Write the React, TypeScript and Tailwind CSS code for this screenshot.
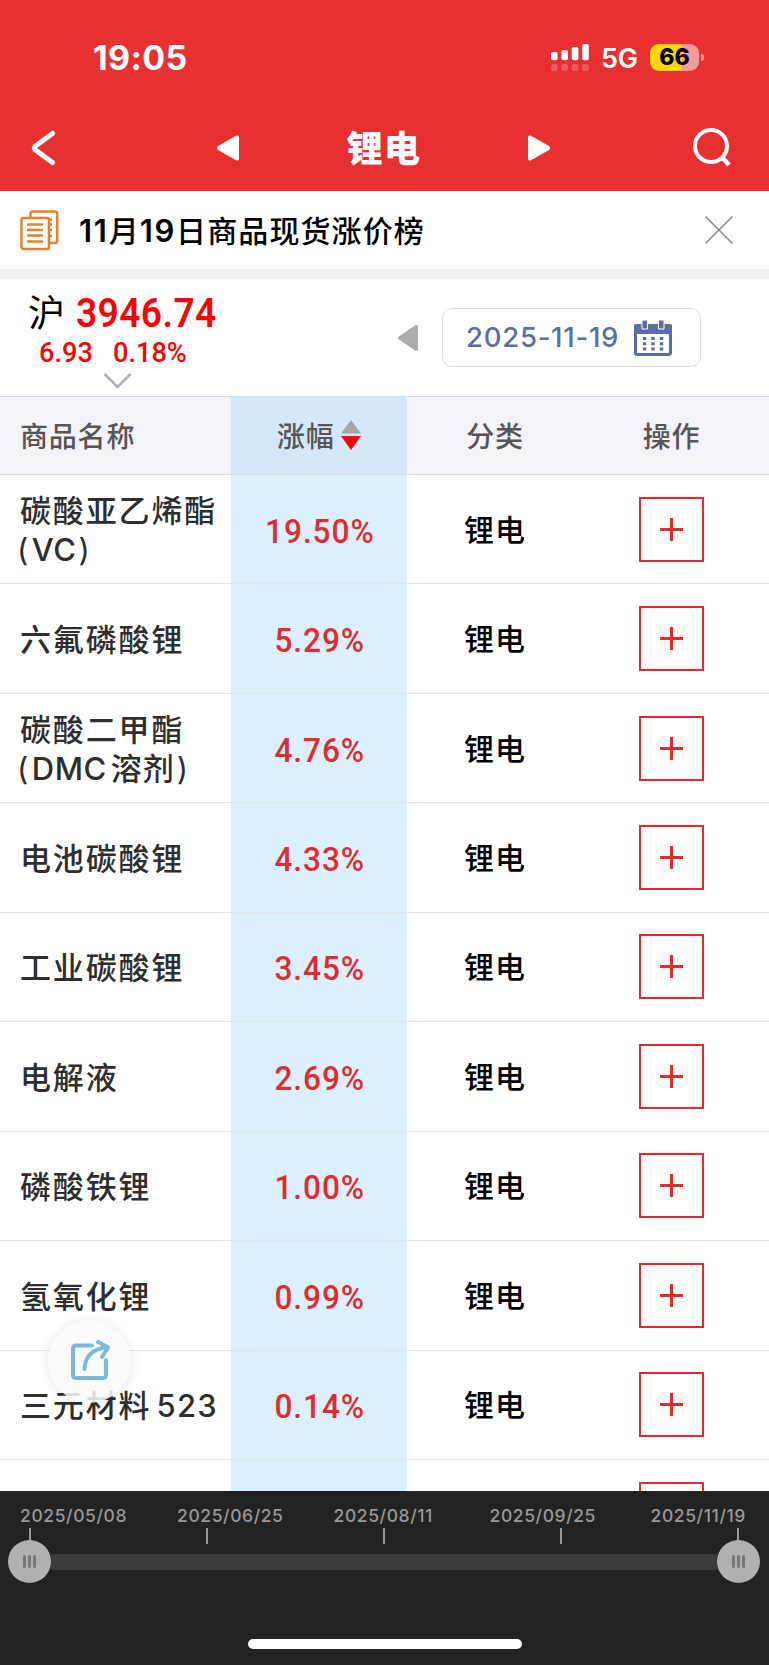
import React from "react";

function Paren({ children }: { children: React.ReactNode }) {
  return (
    <span className="ml-[-3px] inline-flex tracking-[0.5px]">
      <span className="mr-[3px] font-normal">(</span>
      {children}
      <span className="ml-[2px] font-normal">)</span>
    </span>
  );
}

const rows: { name: React.ReactNode[]; pct: string }[] = [
  { name: ["碳酸亚乙烯酯", <Paren>VC</Paren>], pct: "19.50" },
  { name: ["六氟磷酸锂"], pct: "5.29" },
  {
    name: [
      "碳酸二甲酯",
      <Paren>
        <span className="mr-[4px]">DMC</span>
        <span className="tracking-[1px]">溶剂</span>
      </Paren>,
    ],
    pct: "4.76",
  },
  { name: ["电池碳酸锂"], pct: "4.33" },
  { name: ["工业碳酸锂"], pct: "3.45" },
  { name: ["电解液"], pct: "2.69" },
  { name: ["磷酸铁锂"], pct: "1.00" },
  { name: ["氢氧化锂"], pct: "0.99" },
  {
    name: [
      <span className="[word-spacing:-5px]">
        三元材料 <span className="tracking-[1.2px]">523</span>
      </span>,
    ],
    pct: "0.14",
  },
  { name: [""], pct: "" },
];

const dates = ["2025/05/08", "2025/06/25", "2025/08/11", "2025/09/25", "2025/11/19"];

function StatusBar() {
  return (
    <div className="flex h-[102px] items-start pl-[93px] pr-[65px] pt-[38px] text-white">
      <div className="text-[34px] font-bold leading-[40px] tracking-[0.4px]">19:05</div>
      <svg className="ml-auto mt-[5px]" width="40" height="29" viewBox="0 0 40 29" fill="#fff">
        <rect x="1" y="9" width="6.6" height="8.2" rx="2" />
        <rect x="11.4" y="7" width="6.6" height="10.2" rx="2" />
        <rect x="21.8" y="4" width="6.6" height="13.2" rx="2" />
        <rect x="32.2" y="1" width="6.6" height="16.2" rx="2" />
        <g opacity="0.2">
          <rect x="1" y="21" width="6.6" height="7" rx="2" />
          <rect x="11.4" y="21" width="6.6" height="7" rx="2" />
          <rect x="21.8" y="21" width="6.6" height="7" rx="2" />
          <rect x="32.2" y="21" width="6.6" height="7" rx="2" />
        </g>
      </svg>
      <div className="ml-[11px] text-[27px] font-semibold leading-[41px] tracking-[-0.1px]">5G</div>
      <div className="ml-[12px] mt-[6px] flex h-[27px] w-[49px] items-center justify-center rounded-[9px] bg-[linear-gradient(90deg,#ffd60a_66%,#f39a9c_66%)] text-[23px] font-extrabold text-black">
        66
      </div>
      <div className="ml-[2px] mt-[16px] h-[7px] w-[3px] rounded-r-full bg-[#f39a9c]" />
    </div>
  );
}

function TitleBar() {
  return (
    <div className="flex h-[89px] items-center justify-between pl-[30px] pr-[38px] text-white">
      <svg width="26" height="38" viewBox="0 0 26 38" fill="none" stroke="#fff" strokeWidth="5" strokeLinecap="round" strokeLinejoin="round" className="mt-[2px]">
        <path d="M22.500 4.500L5.500 17Q3 19 5.500 21L22.500 33.500" />
      </svg>
      <div className="mr-[-19px] flex items-center">
        <svg width="24" height="28" viewBox="0 0 24 28" fill="#fff" className="mt-[3px]">
          <path d="M2 12L20 1.800Q23 .5 23 3.500V24.500Q23 27.500 20 26.200L2 16Q0 14 2 12Z" />
        </svg>
        <div className="ml-[107px] mr-[106px] mt-[5px] text-[36px] font-black leading-[44px] tracking-[1.2px]">锂电</div>
        <svg width="24" height="28" viewBox="0 0 24 28" fill="#fff" className="mt-[3px]">
          <path d="M22 12L4 1.800Q1 .5 1 3.500V24.500Q1 27.500 4 26.200L22 16Q24 14 22 12Z" />
        </svg>
      </div>
      <svg width="39" height="40" viewBox="0 0 39 40" fill="none" stroke="#fff" strokeWidth="4">
        <circle cx="19" cy="19" r="16" />
        <path d="M29.500 29.500L37 38" strokeWidth="4.500" />
      </svg>
    </div>
  );
}

function Notice() {
  return (
    <div className="flex h-[78px] items-center pl-[19px] pr-[35px]">
      <svg width="41" height="42" viewBox="0 0 41 42" fill="none" stroke="#e58127" strokeWidth="2.400" strokeLinejoin="round">
        <path d="M11.500 8V4.500Q11.500 2.500 13.500 2.500H36Q38.200 2.500 38.200 4.500V32Q38.200 34 36 34H30" />
        <rect x="2.500" y="9" width="27.500" height="31" rx="2" />
        <path d="M8 15.500H24M8 21H24M8 26.500H24M8 32.500H24M29.500 10.500H33M29.500 15.500H33M29.500 21H33M29.500 27H33" />
      </svg>
      <div className="ml-[19px] mt-[1px] whitespace-nowrap text-[30px] font-medium leading-[40px] tracking-[1.1px] text-black">
        <span className="text-[31px] font-semibold tracking-[1.7px]">11</span>月
        <span className="text-[31px] font-semibold tracking-[1.7px]">19</span>日商品现货涨价榜
      </div>
      <svg className="ml-auto" width="30" height="30" viewBox="0 0 30 30" stroke="#8b8b8b" strokeWidth="1.600">
        <path d="M1.500 1.500L28.500 28.500M28.500 1.500L1.500 28.500" />
      </svg>
    </div>
  );
}

function IndexBar() {
  return (
    <div className="flex h-[117px]">
      <div className="w-[236px] pt-[10px]">
        <div className="flex h-[50px] items-center pl-[28px]">
          <span className="text-[37px] leading-[50px] text-black">沪</span>
          <span className="ml-[11px] origin-left scale-x-[0.93] font-[Roboto] text-[40px] font-semibold leading-[50px] tracking-[0.4px] text-[#ff0000]">
            3946.74
          </span>
        </div>
        <div className="flex h-[30px] items-center pl-[39px] font-[Roboto] text-[28px] font-medium leading-[28px] text-[#ff0000]">
          <span className="mt-[-2px] origin-left scale-x-[0.97]">6.93</span>
          <span className="ml-[18px] mt-[-2px] origin-left scale-x-[0.97]">0.18%</span>
        </div>
        <svg className="ml-[103px] mt-[4px]" width="29" height="16" viewBox="0 0 29 16" fill="none" stroke="#b0b0b0" strokeWidth="2.500">
          <path d="M1.500 1L14.500 14L27.500 1" />
        </svg>
      </div>
      <svg className="ml-[161px] mt-[45px]" width="22" height="28" viewBox="0 0 22 28" fill="#acacac">
        <path d="M2 12.500L18 1.500Q21 0 21 3V25Q21 28 18 26.500L2 15.500Q0 14 2 12.500Z" />
      </svg>
      <div className="ml-[23px] mt-[29px] flex h-[59px] w-[259px] items-center rounded-[10px] border border-[#dedede] pl-[23px] text-[#5a6da5]">
        <span className="w-[152px] whitespace-nowrap text-[27.5px] font-medium tracking-[0.75px]">2025-11-19</span>
        <svg className="ml-[16px]" width="38" height="36" viewBox="0 0 38 36">
          <rect x="1.500" y="6" width="35" height="28.500" rx="2" fill="#fff" stroke="#5a6da5" strokeWidth="3" />
          <path d="M0 6Q0 4 2 4H36Q38 4 38 6V14H0Z" fill="#5a6da5" />
          <path d="M8 0H13.500V9H8ZM24.500 0H30V9H24.500Z" fill="#5a6da5" stroke="#fff" strokeWidth="1" />
          <path d="M10.500 17V30.500M19 17V30.500M27.500 17V30.500" stroke="#5a6da5" strokeWidth="3.500" strokeDasharray="3 2.200" />
        </svg>
      </div>
    </div>
  );
}

function HeaderRow() {
  return (
    <div className="flex h-[79px] border-y border-[#dcdcdc] bg-[#f4f3fa] text-[28px] font-medium leading-[80px] tracking-[0.8px] text-[#555]">
      <div className="h-[77px] w-[231px] pl-[20px]">商品名称</div>
      <div className="flex h-[77px] w-[176px] bg-[#d5e8f9] pl-[46px]">
        <span>涨幅</span>
        <svg className="ml-[6px] mt-[23px]" width="20" height="30" viewBox="0 0 20 30">
          <path d="M10 0L20 13.500H0Z" fill="#a6a6a6" />
          <path d="M10 30L0 16H20Z" fill="#ff0000" />
        </svg>
      </div>
      <div className="h-[77px] w-[176px] text-center">分类</div>
      <div className="h-[77px] w-[177px] text-center">操作</div>
    </div>
  );
}

function Row({ name, pct }: { name: React.ReactNode[]; pct: string }) {
  return (
    <div className="flex h-[109.45px] shrink-0 border-b border-[#e6e6e6]">
      <div className="flex w-[231px] flex-col justify-center whitespace-nowrap pl-[20px] pt-[3px] text-[31px] font-medium leading-[38.5px] tracking-[1.85px] text-[#2e2e2e]">
        {name.map((line, i) => (
          <div key={i} className="h-[38.5px]">{line}</div>
        ))}
      </div>
      <div className="flex w-[176px] items-center justify-center bg-[#dbf1ff] pt-[4px] font-[Roboto] text-[34px] font-medium text-[#e32b2e]">
        {pct && (
          <div className="scale-x-[0.93]">
            <span className="tracking-[1px]">{pct}</span>
            <span>%</span>
          </div>
        )}
      </div>
      <div className="flex w-[176px] items-center justify-center pt-[2px] text-[30px] font-medium tracking-[1px] text-black">
        {pct ? "锂电" : ""}
      </div>
      <div className="flex w-[177px] items-center justify-center">
        <div className="flex h-[65px] w-[65px] items-center justify-center border-2 border-[#e8292b]">
          <svg width="23" height="23" viewBox="0 0 23 23" stroke="#e8292b" strokeWidth="3">
            <path d="M11.500 0V23M0 11.500H23" />
          </svg>
        </div>
      </div>
    </div>
  );
}

function Knob() {
  return (
    <div className="flex h-[43px] w-[43px] items-center justify-center gap-[2px] rounded-full bg-[#b1b1b1]">
      <i className="h-[13px] w-[3px] rounded-full bg-[#777]" />
      <i className="h-[13px] w-[3px] rounded-full bg-[#777]" />
      <i className="h-[13px] w-[3px] rounded-full bg-[#777]" />
    </div>
  );
}

function Timeline() {
  return (
    <div className="h-[174px] bg-[#222] pt-[14px]">
      <div className="grid h-[22px] grid-cols-[157px_156.500px_156px_161px_1fr] whitespace-nowrap pl-[20px] text-[17.5px] font-medium leading-[22px] tracking-[0.6px] text-[#999]">
        {dates.map((d) => (
          <span key={d}>{d}</span>
        ))}
      </div>
      <div className="mt-px flex h-[16px] justify-between pl-[29px] pr-[30px]">
        {dates.map((d) => (
          <i key={d} className="w-[2px] bg-[#999]" />
        ))}
      </div>
      <div className="mt-[-4px] flex h-[43px] items-center pl-[8px] pr-[9px]">
        <Knob />
        <div className="h-[16px] flex-1 bg-[#3b3b3b]" />
        <Knob />
      </div>
      <div className="mx-auto mt-[56px] h-[10px] w-[274px] rounded-full bg-white" />
    </div>
  );
}

export default function App() {
  return (
    <div className="relative flex h-[1665px] w-[769px] flex-col overflow-hidden bg-white font-['Inter','Noto_Sans_CJK_SC',sans-serif]">
      <div className="bg-[#e83031]">
        <StatusBar />
        <TitleBar />
      </div>
      <Notice />
      <div className="h-[10px] bg-[#f2f2f2]" />
      <IndexBar />
      <HeaderRow />
      <div className="flex min-h-0 flex-1 flex-col overflow-hidden">
        {rows.map((r, i) => (
          <Row key={i} {...r} />
        ))}
      </div>
      <Timeline />
      <div className="absolute left-[48px] top-[1320px] flex h-[83px] w-[83px] items-center justify-center rounded-full bg-[#fafafa]/85 shadow-[0_1px_12px_rgba(0,0,0,0.1)]">
        <svg width="40" height="42" viewBox="0 0 40 42" fill="none" stroke="#7ab8dc" strokeWidth="4" strokeLinecap="round" strokeLinejoin="round" className="mt-[-4px]">
          <path d="M22 6.500H6Q3 6.500 3 9.500V36Q3 39 6 39H33Q36 39 36 36V21" />
          <path d="M14.500 30C15 18 22 9.500 37 8.500M28 3L38 8.500L32 18" />
        </svg>
      </div>
    </div>
  );
}
